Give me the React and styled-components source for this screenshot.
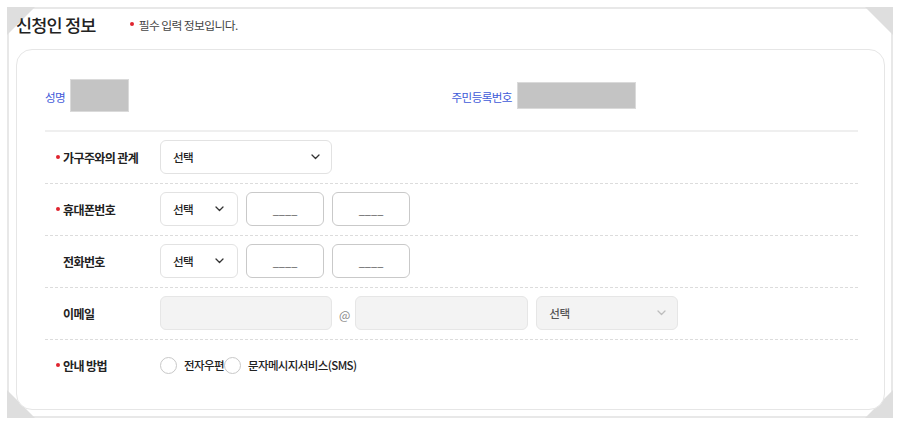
import React from "react";
import styled, { createGlobalStyle } from "styled-components";

const GlobalStyle = createGlobalStyle`
  html, body {
    margin: 0;
    padding: 0;
    background: #ffffff;
  }
  body {
    font-family: "Noto Sans CJK KR", "Noto Sans", sans-serif;
    color: #222;
  }
  * {
    box-sizing: border-box;
  }
`;

const Frame = styled.section`
  position: relative;
  margin: 7px;
  width: 886px;
  height: 411px;
  border: 2px solid #e8e8e8;
  display: flex;
  flex-direction: column;
`;

const clips = {
  tl: "polygon(0 0, 100% 0, 0 100%)",
  tr: "polygon(0 0, 100% 0, 100% 100%)",
  bl: "polygon(0 0, 0 100%, 100% 100%)",
  br: "polygon(100% 0, 100% 100%, 0 100%)",
};

const Corner = styled.span`
  position: absolute;
  width: 28px;
  height: 28px;
  background: #dedede;
  clip-path: ${(p) => clips[p.pos]};
  ${(p) => (p.pos[0] === "t" ? "top: -2px;" : "bottom: -2px;")}
  ${(p) => (p.pos[1] === "l" ? "left: -2px;" : "right: -2px;")}
`;

const Header = styled.header`
  position: relative;
  height: 30px;
  padding-left: 7px;
  display: flex;
  align-items: center;
`;

const Title = styled.h2`
  margin: 0;
  font-size: 17.5px;
  font-weight: 500;
  letter-spacing: -0.8px;
  color: #222;
`;

const Note = styled.p`
  margin: 0 0 0 34px;
  display: flex;
  align-items: center;
  font-size: 11.8px;
  letter-spacing: -0.6px;
  color: #444;
`;

const Dot = styled.span`
  display: inline-block;
  flex-shrink: 0;
  width: 4px;
  height: 4px;
  border-radius: 50%;
  background: #e0242f;
  margin-right: ${(p) => p.gap || 5}px;
`;

const Card = styled.div`
  position: relative;
  margin: 10px 6px 6px 7px;
  flex: 1;
  border: 1px solid #e6e6e6;
  border-radius: 16px;
  background: #fff;
  padding: 0 26px 18px 28px;
`;

const InfoRow = styled.div`
  display: grid;
  grid-template-columns: 1fr 1fr;
  padding: 29px 0 18px;
  border-bottom: 2px solid #efefef;
`;

const InfoItem = styled.div`
  display: flex;
  align-items: center;
`;

const InfoLabel = styled.span`
  font-size: 11.6px;
  letter-spacing: -0.6px;
  color: #3f5bd9;
  margin-right: 5px;
  padding-top: 3px;
`;

const Masked = styled.span`
  display: block;
  width: ${(p) => p.w}px;
  height: ${(p) => p.h}px;
  background: #c4c4c4;
  border: 1px solid #dadada;
`;

const Row = styled.div`
  display: flex;
  align-items: center;
  padding: 8px 0 9px;
  border-bottom: ${(p) => (p.last ? "none" : "1px dashed #dcdcdc")};
`;

const Label = styled.div`
  width: 115px;
  flex-shrink: 0;
  display: flex;
  align-items: center;
  padding-left: 11px;
  font-size: 12px;
  font-weight: 700;
  letter-spacing: -0.6px;
  color: #222;
`;

const DotSlot = styled.span`
  width: 7px;
  flex-shrink: 0;
  display: flex;
  align-items: center;
`;

const Controls = styled.div`
  display: flex;
  align-items: center;
  gap: 8px;
  height: 34px;
`;

const SelectBox = styled.div`
  width: ${(p) => p.w}px;
  height: 34px;
  border: 1px solid ${(p) => (p.disabled ? "#e6e6e6" : "#e2e2e2")};
  border-radius: 6px;
  background: ${(p) => (p.disabled ? "#f3f3f3" : "#fff")};
  padding: 0 ${(p) => (p.w < 100 ? 13 : 11)}px 0 12px;
  display: flex;
  align-items: center;
  justify-content: space-between;
  font-size: 11.6px;
  font-weight: 500;
  letter-spacing: -0.6px;
  color: ${(p) => (p.disabled ? "#555" : "#222")};
`;

const TextInput = styled.input`
  width: ${(p) => p.w}px;
  height: 34px;
  border: 1px solid ${(p) => (p.disabled ? "#e6e6e6" : "#c9c9c9")};
  border-radius: 6px;
  background: ${(p) => (p.disabled ? "#f3f3f3" : "#fff")};
  font-family: inherit;
  font-size: 11px;
  text-align: center;
  outline: none;
  &::placeholder {
    color: #555;
  }
`;

const At = styled.span`
  font-size: 12px;
  color: #8a8a8a;
  margin: 0 -3px 0 -1px;
  padding-top: 2px;
`;

const RadioGroup = styled.div`
  display: flex;
  align-items: center;
  height: 34px;
`;

const RadioOption = styled.label`
  display: flex;
  align-items: center;
  font-size: 11.5px;
  font-weight: 500;
  letter-spacing: -0.6px;
  color: #222;
`;

const RadioCircle = styled.span`
  width: 17px;
  height: 17px;
  border-radius: 50%;
  border: 1px solid #c8c8c8;
  background: #fff;
  margin-right: 7px;
`;

const Chevron = ({ light }) => (
  <svg width="9" height="6" viewBox="0 0 9 6" fill="none">
    <path
      d="M1 1 L4.5 4.5 L8 1"
      stroke={light ? "#bdbdbd" : "#333"}
      strokeWidth="1.3"
      strokeLinecap="round"
      strokeLinejoin="round"
    />
  </svg>
);

const Select = ({ w, disabled }) => (
  <SelectBox w={w} disabled={disabled}>
    선택
    <Chevron light={disabled} />
  </SelectBox>
);

const FieldLabel = ({ required, children }) => (
  <Label>
    <DotSlot>{required && <Dot gap={0} />}</DotSlot>
    {children}
  </Label>
);

export default function App() {
  return (
    <>
      <GlobalStyle />
      <Frame>
        <Corner pos="tl" />
        <Corner pos="tr" />
        <Corner pos="bl" />
        <Corner pos="br" />
        <Header>
          <Title>신청인 정보</Title>
          <Note>
            <Dot />
            필수 입력 정보입니다.
          </Note>
        </Header>
        <Card>
          <InfoRow>
            <InfoItem>
              <InfoLabel>성명</InfoLabel>
              <Masked w={59} h={33} />
            </InfoItem>
            <InfoItem>
              <InfoLabel>주민등록번호</InfoLabel>
              <Masked w={119} h={27} />
            </InfoItem>
          </InfoRow>

          <Row>
            <FieldLabel required>가구주와의 관계</FieldLabel>
            <Controls>
              <Select w={172} />
            </Controls>
          </Row>

          <Row>
            <FieldLabel required>휴대폰번호</FieldLabel>
            <Controls>
              <Select w={78} />
              <TextInput w={78} placeholder="____" />
              <TextInput w={78} placeholder="____" />
            </Controls>
          </Row>

          <Row>
            <FieldLabel>전화번호</FieldLabel>
            <Controls>
              <Select w={78} />
              <TextInput w={78} placeholder="____" />
              <TextInput w={78} placeholder="____" />
            </Controls>
          </Row>

          <Row>
            <FieldLabel>이메일</FieldLabel>
            <Controls>
              <TextInput w={172} disabled />
              <At>@</At>
              <TextInput w={173} disabled />
              <Select w={142} disabled />
            </Controls>
          </Row>

          <Row last>
            <FieldLabel required>안내 방법</FieldLabel>
            <RadioGroup>
              <RadioOption>
                <RadioCircle />
                전자우편
              </RadioOption>
              <RadioOption>
                <RadioCircle />
                문자메시지서비스(SMS)
              </RadioOption>
            </RadioGroup>
          </Row>
        </Card>
      </Frame>
    </>
  );
}
